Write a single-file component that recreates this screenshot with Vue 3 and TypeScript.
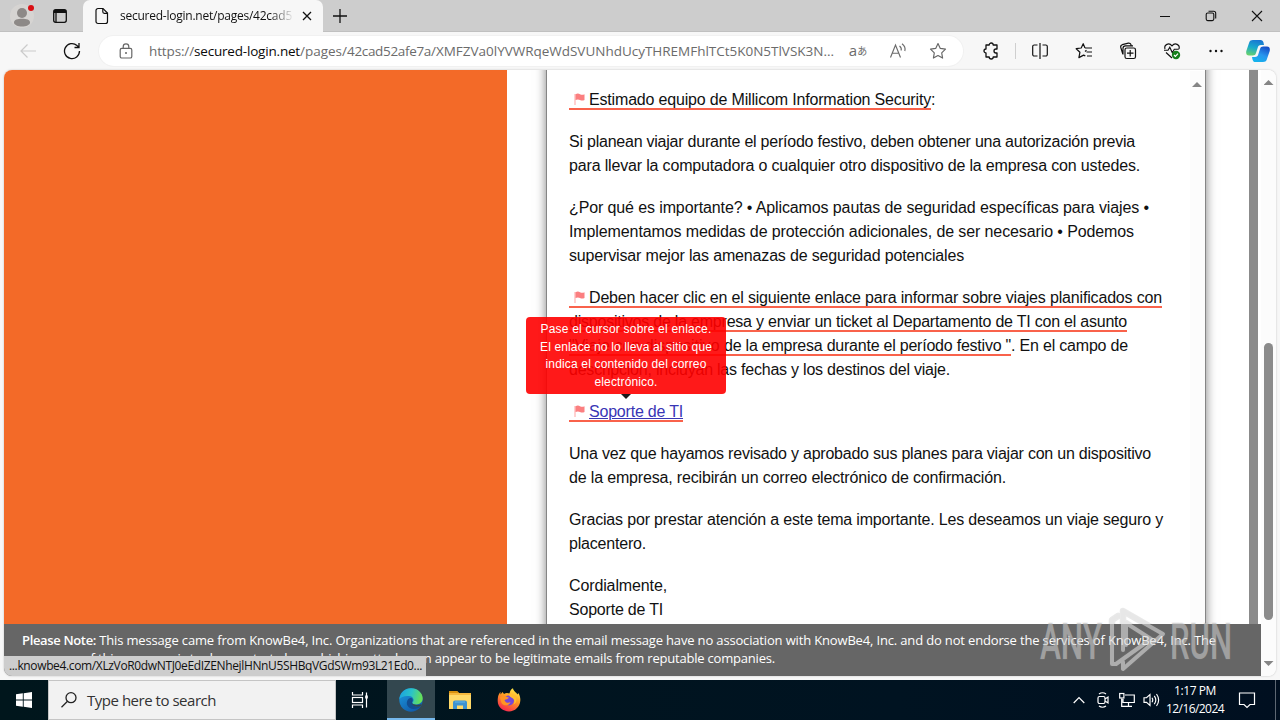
<script setup lang="ts">
interface Segment {
  text: string
  width: number
  kind?: 'marked' | 'link'
  flag?: boolean
}

/* Spreads the text evenly so that it takes up the given width. */
const vFit = {
  mounted(el: HTMLElement, binding: { value: number }) {
    const natural = el.getBoundingClientRect().width
    const count = (el.textContent ?? '').length
    if (count > 0) el.style.letterSpacing = `${(binding.value - natural) / count}px`
  },
}

const paragraphs: Segment[][][] = [
  [[{ text: 'Estimado equipo de Millicom Information Security', width: 342, kind: 'marked', flag: true }, { text: ':', width: 4 }]],
  [
    [{ text: 'Si planean viajar durante el período festivo, deben obtener una autorización previa', width: 566 }],
    [{ text: 'para llevar la computadora o cualquier otro dispositivo de la empresa con ustedes.', width: 571 }],
  ],
  [
    [{ text: '¿Por qué es importante? • Aplicamos pautas de seguridad específicas para viajes •', width: 580 }],
    [{ text: 'Implementamos medidas de protección adicionales, de ser necesario • Podemos', width: 565 }],
    [{ text: 'supervisar mejor las amenazas de seguridad potenciales', width: 395 }],
  ],
  [
    [{ text: 'Deben hacer clic en el siguiente enlace para informar sobre viajes planificados con', width: 573, kind: 'marked', flag: true }],
    [{ text: 'dispositivos de la empresa y enviar un ticket al Departamento de TI con el asunto', width: 558, kind: 'marked' }],
    [
      { text: '"Viaje con dispositivo ', width: 155, kind: 'marked' },
      { text: 'de la empresa durante el período festivo "', width: 287, kind: 'marked' },
      { text: '. En el campo de', width: 117 },
    ],
    [{ text: 'descripción, incluyan las fechas y los destinos del viaje.', width: 381 }],
  ],
  [[{ text: 'Soporte de TI', width: 94, kind: 'link', flag: true }]],
  [
    [{ text: 'Una vez que hayamos revisado y aprobado sus planes para viajar con un dispositivo', width: 582 }],
    [{ text: 'de la empresa, recibirán un correo electrónico de confirmación.', width: 437 }],
  ],
  [
    [{ text: 'Gracias por prestar atención a este tema importante. Les deseamos un viaje seguro y', width: 594 }],
    [{ text: 'placentero.', width: 77 }],
  ],
  [[{ text: 'Cordialmente,', width: 98 }], [{ text: 'Soporte de TI', width: 94 }]],
]

const tip: Segment[] = [
  { text: 'Pase el cursor sobre el enlace.', width: 171 },
  { text: 'El enlace no lo lleva al sitio que', width: 172 },
  { text: 'indica el contenido del correo', width: 161 },
  { text: 'electrónico.', width: 63 },
]
</script>

<template>
  <div class="screen">
    <header class="tabstrip">
      <div class="cell profile">
        <svg width="28" height="28" viewBox="0 0 28 28">
          <circle cx="14" cy="14" r="12" fill="#d6d4d2" />
          <circle cx="14" cy="11" r="5" fill="#8d8987" />
          <path d="M6 20.5c0-3 3.500-3.800 8-3.800s8 .8 8 3.800c0 2.500-4 4-8 4s-8-1.500-8-4z" fill="#8d8987" />
          <circle cx="23" cy="6" r="3" fill="#d90f14" />
        </svg>
      </div>
      <div class="cell tabmenu">
        <svg width="16" height="16" viewBox="0 0 16 16" fill="none" stroke="#111">
          <rect x="1.700" y="1.700" width="12.600" height="12.600" rx="2" stroke-width="1.300" />
          <path d="M2 3.500h12" stroke-width="3" /><path d="M4 3v11" stroke-width="1.300" />
        </svg>
      </div>
      <div class="tab">
        <svg width="14" height="18" viewBox="0 0 14 18" fill="none" stroke="#111" stroke-width="1.200">
          <path d="M3 1.500h5l4.500 4.500v8.500a2 2 0 0 1-2 2H3a2 2 0 0 1-2-2v-11a2 2 0 0 1 2-2z" />
          <path d="M7.800 1.800v3a1.500 1.500 0 0 0 1.500 1.500h3" />
        </svg>
        <div class="tabname"><span v-fit="172" class="run">secured-login.net/pages/42cad5</span></div>
        <svg width="12" height="12" viewBox="0 0 12 12" stroke="#111" stroke-width="1.300"><path d="M2 2l8 8M10 2l-8 8" /></svg>
      </div>
      <div class="cell plus">
        <svg width="16" height="16" viewBox="0 0 16 16" stroke="#111" stroke-width="1.300"><path d="M8 1v14M1 8h14" /></svg>
      </div>
      <div class="controls">
        <div class="cell"><svg width="12" height="12" viewBox="0 0 12 12" stroke="#111"><path d="M1 6.500h10" /></svg></div>
        <div class="cell">
          <svg width="12" height="12" viewBox="0 0 12 12" fill="none" stroke="#111" stroke-width="1.100">
            <rect x="1.200" y="3" width="7.600" height="7.600" rx="1.500" /><path d="M3.500 1.200h5.200a2 2 0 0 1 2 2v5.200" />
          </svg>
        </div>
        <div class="cell"><svg width="12" height="12" viewBox="0 0 12 12" stroke="#111" stroke-width="1.100"><path d="M1 1l10 10M11 1L1 11" /></svg></div>
      </div>
    </header>

    <nav class="toolbar">
      <div class="tool first">
        <svg width="18" height="16" viewBox="0 0 18 16" fill="none" stroke="#cbcbcb" stroke-width="1.200"><path d="M17 8H2M8.500 1.500L2 8l6.500 6.500" /></svg>
      </div>
      <div class="tool">
        <svg width="18" height="18" viewBox="0 0 18 18" fill="none" stroke="#111" stroke-width="1.300"><path d="M16.500 9A7.500 7.500 0 1 1 14 3.500L16 5.200M16 1v4.500h-4.500" /></svg>
      </div>
      <div class="address">
        <svg class="lock" width="14" height="16" viewBox="0 0 14 16" fill="none" stroke="#666" stroke-width="1.200">
          <rect x="1.200" y="5.300" width="11.600" height="9.700" rx="1.600" /><path d="M4.200 5.200V3.700a2.800 2.800 0 0 1 5.600 0v1.500" /><circle cx="7" cy="10" r="1" fill="#666" stroke="none" />
        </svg>
        <div class="url">
          <span v-fit="45" class="run">https://</span><span v-fit="106" class="run host">secured-login.net</span><span v-fit="47" class="run">/pages/</span><span v-fit="84" class="run">42cad52afe7a</span><span v-fit="403" class="run">/XMFZVa0lYVWRqeWdSVUNhdUcyTHREMFhlTCt5K0N5TlVSK3N...</span>
        </div>
        <div class="inpill"><span class="lat">a</span><span class="kana">あ</span></div>
        <div class="inpill">
          <svg width="18" height="18" viewBox="0 0 18 18" fill="none" stroke="#6b6b6b" stroke-width="1.150">
            <path d="M1.500 15.500L6.500 3l5 12.500M3.200 11.200h6.600M10.500 4q2.300 1.800 1.700 4.500M13 1.700q4 2.800 2.800 7.300" />
          </svg>
        </div>
        <div class="inpill">
          <svg width="18" height="18" viewBox="0 0 18 18" fill="none" stroke="#666" stroke-width="1.150" stroke-linejoin="round">
            <path d="M9 1.500l2.300 4.900 5.200.7-3.800 3.700.9 5.300L9 13.600l-4.600 2.500.9-5.300L1.500 7.100l5.200-.7z" />
          </svg>
        </div>
      </div>
      <div class="tool ext">
        <svg width="18" height="18" viewBox="0 0 18 18" fill="none" stroke="#111" stroke-width="1.300" stroke-linejoin="round">
          <path d="M4 3h3.200a2 2 0 0 1 4 0H15v4h-1a2 2 0 0 0 0 4h1v4h-3.800a2 2 0 0 1-4 0H4v-4a2 2 0 1 1 0-4z" />
        </svg>
      </div>
      <div class="rule"></div>
      <div class="tool">
        <svg width="18" height="18" viewBox="0 0 18 18" fill="none" stroke="#111" stroke-width="1.200">
          <path d="M6.500 3H3.200A1.500 1.500 0 0 0 1.700 4.500v8A1.500 1.500 0 0 0 3.200 14h3.300M9 1v16M11.500 3h3.300a1.500 1.500 0 0 1 1.500 1.500v8a1.500 1.500 0 0 1-1.500 1.500h-3.300" />
        </svg>
      </div>
      <div class="tool">
        <svg width="18" height="18" viewBox="0 0 18 18" fill="none" stroke="#111" stroke-width="1.200" stroke-linejoin="round">
          <path d="M10 6H17M11.500 10H17M12 14H17M10 6L8.200 1.700 6.200 6 1.200 6.700l3.700 3.600-1 5.300 4.700-2.500 1.700.8M10 9.500l1.500-1.200" />
        </svg>
      </div>
      <div class="tool">
        <svg width="18" height="18" viewBox="0 0 18 18" fill="none" stroke="#111" stroke-width="1.200">
          <rect x="6" y="6" width="10.500" height="10.500" rx="1.800" /><path d="M11.200 8v6.500M8 11.200h6.500M3.800 12L1.800 5.500A2.300 2.300 0 0 1 3.300 2.700l6-1.500a2.300 2.300 0 0 1 2.800 2M4 12.500V6.300a2.500 2.500 0 0 1 2.500-2.500H14" />
        </svg>
      </div>
      <div class="tool">
        <svg width="18" height="18" viewBox="0 0 18 18" fill="none" stroke="#111" stroke-width="1.150">
          <path d="M2 7C.7 2.500 6 .2 9 3.800 12 .2 17.300 2.500 16 7M1 8.200h4l1.800-3 2.500 5.500 2-3.500h4.500M3 10.500l6 5.500" />
          <circle cx="13" cy="13" r="4.200" fill="#15801b" stroke="none" /><path d="M11 13l1.400 1.500 2.600-2.800" stroke="#fff" />
        </svg>
      </div>
      <div class="tool">
        <svg width="16" height="4" viewBox="0 0 16 4" fill="#111"><circle cx="2.500" cy="2" r="1.200" /><circle cx="8" cy="2" r="1.200" /><circle cx="13.500" cy="2" r="1.200" /></svg>
      </div>
      <div class="tool copilot">
        <svg width="24" height="24" viewBox="0 0 24 24">
          <defs>
            <linearGradient id="ca" x1=".6" y1="0" x2=".3" y2="1"><stop offset="0" stop-color="#1976d2" /><stop offset=".5" stop-color="#18a9cc" /><stop offset="1" stop-color="#66d16f" /></linearGradient>
            <linearGradient id="cb" x1=".7" y1="0" x2=".2" y2="1"><stop offset="0" stop-color="#164fc7" /><stop offset=".5" stop-color="#2796ee" /><stop offset="1" stop-color="#14b6ec" /></linearGradient>
          </defs>
          <path d="M7 1h7.500c1.800 0 2.500 1 3 2.600L18 6h-3c-2 0-2.800 1-3.300 2.800L10 14c-.6 1.800-1.500 2.500-3.200 2.500H3C.5 16.500-.2 14.500.3 12L3.200 3.500C3.900 1.700 5 1 7 1z" fill="url(#ca)" />
          <path d="M17 23H9.500c-1.800 0-2.500-1-3-2.600L6 18h3c2 0 2.800-1 3.300-2.800L14 10c.6-1.800 1.500-2.500 3.200-2.500H21c2.500 0 3.200 2 2.700 4.500l-2.900 8.500C20.100 22.300 19 23 17 23z" fill="url(#cb)" />
        </svg>
      </div>
    </nav>

    <main class="viewport">
      <div class="page">
        <div class="columns">
          <aside class="orange"></aside>
          <section class="stage">
            <article class="mail">
              <div class="body">
                <div v-for="(p, i) in paragraphs" :key="i" class="para">
                  <div v-for="(line, j) in p" :key="j" class="line">
                    <span v-for="(s, k) in line" :key="k" class="seg" :class="s.kind">
                      <svg v-if="s.flag" class="flag" width="20" height="20" viewBox="0 0 20 20">
                        <path d="M6 6v11" stroke="#ffb3b3" stroke-width="1.200" />
                        <path d="M6.500 6.200q2.500-1.200 4.500 0t4.500 0V12q-2.500 1.200-4.500 0t-4.500 0z" fill="#fb7f80" />
                      </svg>
                      <span v-fit="s.width" class="run">{{ s.text }}</span>
                    </span>
                  </div>
                </div>
              </div>
              <div class="innerbar"><i class="up"></i></div>
            </article>
          </section>
          <div class="graybar"></div>
        </div>
        <footer class="note">
          <div class="noteline"><b v-fit="74" class="run">Please Note:</b><span v-fit="1120" class="run"> This message came from KnowBe4, Inc. Organizations that are referenced in the email message have no association with KnowBe4, Inc. and do not endorse the services of KnowBe4, Inc. The</span></div>
          <div class="noteline"><span v-fit="61" class="run">purpose </span><span v-fit="692" class="run">of this message is to demonstrate how phishing attacks can appear to be legitimate emails from reputable companies.</span></div>
        </footer>
      </div>
      <div class="outerbar"><i class="up"></i><div class="thumb"></div><i class="down"></i></div>

      <div class="tooltip">
        <div v-for="(t, i) in tip" :key="i" class="tipline"><span v-fit="t.width" class="run">{{ t.text }}</span></div>
      </div>
      <div class="status"><span v-fit="413" class="run">...knowbe4.com/XLzVoR0dwNTJ0eEdIZENhejlHNnU5SHBqVGdSWm93L21Ed0...</span></div>
    </main>

    <div class="taskbar">
      <div class="start">
        <svg width="16" height="16" viewBox="0 0 16 16" fill="#fff"><path d="M0 2.300L6.800 1.300V7.500H0zM7.700 1.200L16 0V7.500H7.700zM0 8.400H6.800V14.700L0 13.700zM7.700 8.400H16V16L7.700 14.800z" /></svg>
      </div>
      <div class="search">
        <svg width="18" height="18" viewBox="0 0 18 18" fill="none" stroke="#222" stroke-width="1.300"><circle cx="11" cy="6.700" r="5" /><path d="M7.500 10.300L1.500 16.300" /></svg>
        <span v-fit="129" class="run">Type here to search</span>
      </div>
      <div class="task view">
        <svg width="18" height="18" viewBox="0 0 18 18" fill="none" stroke="#fff" stroke-width="1.200">
          <path d="M1.500 1v3h10V1M1.500 17v-3h10v3M15.500 1.500v15" /><rect x="1.500" y="6.500" width="10" height="5" /><rect x="14.200" y="4.500" width="2.600" height="3" fill="#fff" stroke="none" />
        </svg>
      </div>
      <div class="task edge">
        <svg width="24" height="24" viewBox="0 0 24 24">
          <defs>
            <linearGradient id="ea" x1="0" y1=".3" x2="1" y2=".5"><stop offset="0" stop-color="#1aa2e0" /><stop offset=".5" stop-color="#2bc3c8" /><stop offset="1" stop-color="#6be24f" /></linearGradient>
            <linearGradient id="eb" x1="0" y1="0" x2=".7" y2="1"><stop offset="0" stop-color="#1b9de2" /><stop offset="1" stop-color="#1159a8" /></linearGradient>
          </defs>
          <circle cx="12" cy="12" r="11.700" fill="url(#eb)" />
          <path d="M.3 11.500C1 4.500 6 .3 12 .3c7 0 11.700 5 11.700 10 0 4-3 6.200-6.500 6.200-3 0-4.500-1-3.300-2.500 1.500-2 .5-5.500-4-6C5.500 7.500 1.500 9 .3 11.500z" fill="url(#ea)" />
          <path d="M9 11.500c-3 4 0 9.500 5.500 9.500 3 0 5.800-1 7.200-2.500-3 1-8 .5-8.800-3.500-.2-1.500 1-2 .7-3.500-.5-2-3-2-4.600 0z" fill="#124d91" />
          <path d="M13.300 12.500c-.8 1.500-1 2 .3 3.300 2 1.400 6 1.500 9 .2l-.8 2.200c-3 1-8.300.4-9.200-3-.2-1.100.1-1.900.7-2.700z" fill="#33474f" />
        </svg>
      </div>
      <div class="task">
        <svg width="24" height="22" viewBox="0 0 24 22">
          <path d="M1 2h8l2 2h12v16H1z" fill="#f5b83d" /><path d="M1 6h22v14H1z" fill="#ffd968" /><path d="M1 2h8l2 2H1z" fill="#d8910e" />
          <path d="M5 20v-6.500a2 2 0 0 1 2-2h10a2 2 0 0 1 2 2V20h-4v-3.500H9V20z" fill="#3d92d0" /><path d="M7 13h10" stroke="#65b6e7" />
        </svg>
      </div>
      <div class="task">
        <svg width="24" height="24" viewBox="0 0 24 24">
          <defs><linearGradient id="fx" x1=".8" y1="0" x2=".3" y2="1"><stop offset="0" stop-color="#fff04b" /><stop offset=".45" stop-color="#ff9b22" /><stop offset="1" stop-color="#f8254f" /></linearGradient></defs>
          <path d="M1 9c.5-2.500 1.500-4 2.500-5v2.500L5.500 4 7 6c2-1.500 4-1 5.500-.5C13 3 14 1 16 .3c.3 3 3 3.600 4.500 6.200l.7-1.500c1.800 2.500 2.300 5 2.100 7.700-.4 6-5.300 10.700-11.300 10.700S.7 19 .7 13c0-1.500 0-2.500.3-4z" fill="url(#fx)" />
          <circle cx="12" cy="12.500" r="5" fill="#7548d8" /><path d="M3 9.500C6 7 9 8.500 12 9.500c-1 2-3 1.500-4.500 2.500 1 3 4 3.500 6 2-1 4-7 4.500-9 1z" fill="#ff9524" />
          <path d="M12.500 5.500C11 8 14 9 16 10.500s1.500 4 .5 6c4-2 4-7 0-9.500z" fill="#ffbd2e" />
        </svg>
      </div>
      <div class="tray">
        <div class="ico"><svg width="12" height="8" viewBox="0 0 12 8" fill="none" stroke="#fff" stroke-width="1.200"><path d="M.7 7L6 1.500 11.300 7" /></svg></div>
        <div class="ico">
          <svg width="14" height="18" viewBox="0 0 14 18" fill="none" stroke="#fff" stroke-width="1.200"><rect x="2" y="5.500" width="7" height="7" rx="1.500" /><path d="M9 8l3-2v6l-3-2M3 3q3.500-2.500 7 0M3 15q3.500 2.500 7 0" /></svg>
        </div>
        <div class="ico">
          <svg width="16" height="16" viewBox="0 0 16 16" fill="none" stroke="#fff" stroke-width="1.200"><path d="M6 3h9.300v7.500H4V7M9.500 11v3M6 14.300h7M2.700 6.500v7.800H6" /><rect x=".7" y="1.500" width="4.200" height="4.500" /></svg>
        </div>
        <div class="ico">
          <svg width="17" height="16" viewBox="0 0 17 16" fill="none" stroke="#fff" stroke-width="1.150"><path d="M1 5.700h2.500L7 2.500v11l-3.500-3.200H1zM9 5.700q1.500 2.300 0 4.600M11.300 3.800q3 4.200 0 8.400M13.500 2q4.300 6 0 12" /></svg>
        </div>
        <div class="clock">
          <div><span v-fit="42" class="run">1:17 PM</span></div>
          <div><span v-fit="58" class="run">12/16/2024</span></div>
        </div>
        <div class="notice">
          <svg width="18" height="18" viewBox="0 0 18 18" fill="none" stroke="#fff" stroke-width="1.200"><path d="M1.500 2h15v11.500h-4.500L9 16.500l-3-3H1.500z" /></svg>
        </div>
        <div class="peek"></div>
      </div>
    </div>

    <svg class="watermark" width="204" height="72" viewBox="0 0 204 72">
      <g class="wmtext">
        <text x="4" y="54" textLength="62" lengthAdjust="spacingAndGlyphs">ANY</text>
        <text x="134" y="54" textLength="62" lengthAdjust="spacingAndGlyphs">RUN</text>
      </g>
      <g fill="none" stroke-linejoin="round" stroke-linecap="round">
        <path class="halo" d="M82 11L76 15V59L80 59L115 34L90 18V40M87 45V6L127 29L87 64V57" />
        <path class="ribbon" d="M82 11L76 15V59L80 59L115 34L90 18V40M87 45V6L127 29L87 64V57" />
      </g>
    </svg>
  </div>
</template>

<style>
html, body { margin: 0; overflow: hidden; }
</style>

<style scoped>
.screen { position: relative; width: 1280px; height: 720px; overflow: hidden; display: flex; flex-direction: column; background: #f7f7f7; font-family: "Open Sans", "Noto Sans", sans-serif; color: #111; }
.screen * { box-sizing: border-box; }
svg { display: block; flex: none; }
.run { display: inline-block; white-space: pre; flex: none; }
.cell { display: flex; align-items: center; justify-content: center; height: 32px; flex: none; }
.tabstrip { height: 32px; display: flex; background: #cdcdcd; flex: none; box-shadow: inset 0 -1px #c0c0c0; }
.profile { width: 44px; }
.tabmenu { width: 32px; }
.tab { width: 240px; margin-left: 7px; background: #f7f7f7; border-radius: 7px 7px 0 0; display: flex; align-items: center; padding: 0 10px 0 12px; }
.tabname { margin-left: 11px; width: 174px; overflow: hidden; font-size: 12px; line-height: 20px; -webkit-mask-image: linear-gradient(90deg, #000 86%, transparent); mask-image: linear-gradient(90deg, #000 86%, transparent); margin-right: 7px; flex: none; }
.plus { width: 34px; }
.controls { margin-left: auto; display: flex; }
.controls .cell { width: 46px; }
.toolbar { height: 38px; flex: none; display: flex; align-items: center; background: #f7f7f7; }
.tool { width: 44px; height: 38px; display: flex; align-items: center; justify-content: center; flex: none; }
.first { margin-left: 6px; }
.address { margin-left: 5px; width: 864px; height: 30px; border-radius: 15px; background: #fff; box-shadow: 0 0 0 1px #f1f1f1; display: flex; align-items: center; padding-left: 20px; flex: none; }
.url { width: 689px; margin-left: 16px; display: flex; font-size: 13.500px; line-height: 20px; color: #6b6b6b; flex: none; }
.host { color: #0a0a0a; }
.inpill { width: 40px; height: 30px; display: flex; align-items: center; justify-content: center; color: #6b6b6b; flex: none; line-height: 20px; }
.lat { font-size: 15px; margin-top: -3px; }
.kana { font-family: "Noto Sans CJK JP", sans-serif; font-size: 10px; margin-top: -1px; }
.ext { margin-left: 6px; }
.rule { width: 1px; height: 16px; background: #cfcfcf; margin: 0 2px; }
.copilot { width: 40px; }

.viewport { position: relative; height: 606px; margin: 0 4px 4px; width: 1272px; flex: none; display: flex; background: #fff; border-radius: 8px; box-shadow: 0 0 2px #bbb; }
.page { width: 1257px; height: 606px; display: flex; flex-direction: column; overflow: hidden; border-radius: 8px 0 0 8px; }
.columns { height: 554px; display: flex; overflow: hidden; }
.orange { width: 503px; background: #f36a28; }
.stage { width: 742px; padding-left: 39px; overflow: hidden; }
.graybar { width: 9px; background: #8b8b8b; margin-right: 3px; }
.mail { width: 660px; height: 600px; margin-top: -20px; padding-top: 20px; border: 1px solid #858585; background: #fff; box-shadow: 0 0 10px rgba(0, 0, 0, .5); display: flex; }
.body { width: 643px; padding: 17px 0 0 22px; flex: none; font-family: "Liberation Sans", Arial, sans-serif; font-size: 16px; line-height: 24px; color: #111; }
.para { margin-bottom: 18px; }
.line { height: 24px; display: flex; white-space: pre; }
.seg { height: 22px; display: flex; flex: none; }
.marked, .link { border-bottom: 2px solid #f9624b; }
.link .run { color: #3835b5; text-decoration: underline; text-underline-offset: 1px; text-decoration-thickness: 1px; height: 20px; }
.innerbar { width: 15px; background: #fcfcfc; padding-top: 11px; }
.up, .down { display: block; width: 10px; height: 5px; background: #858585; }
.up { clip-path: polygon(50% 0, 100% 100%, 0 100%); }
.down { clip-path: polygon(0 0, 100% 0, 50% 100%); }
.innerbar .up { margin-left: 2px; }
.outerbar { width: 15px; display: flex; flex-direction: column; align-items: center; padding: 10px 0 10px; background: #fcfcfc; border-radius: 0 8px 8px 0; }
.thumb { width: 9px; height: 277px; margin-top: 258px; margin-bottom: auto; background: #8b8b8b; border-radius: 5px; }
.note { height: 52px; background: #666; color: #fff; padding: 7px 0 0 18px; font-size: 13px; line-height: 18px; flex: none; }
.noteline { display: flex; height: 18px; }
.note b { font-weight: 600; }
.tooltip { position: absolute; left: 522px; top: 247px; width: 200px; height: 77px; padding-top: 4px; border-radius: 4px; background: rgba(255, 0, 0, .9); color: #fff; font: 12px/17.500px "Liberation Sans", Arial, sans-serif; text-align: center; }
.tipline { height: 17.500px; }
.tooltip::after { content: ""; position: absolute; left: 95px; top: 77px; border: 5px solid transparent; border-top-color: #1a1a1a; border-bottom: 0; }
.status { position: absolute; left: 0; top: 586px; width: 422px; height: 20px; background: #cdcdcd; border-radius: 0 0 0 8px; padding-left: 5px; font-size: 12px; line-height: 19px; color: #111; }

.taskbar { height: 40px; flex: none; display: flex; background: linear-gradient(90deg, #00161c, #001321 70%, #000f20); color: #fff; }
.start { width: 48px; display: flex; align-items: center; justify-content: center; }
.search { width: 288px; background: #f2f2f2; border: 1px solid #c5c5c5; color: #333; display: flex; align-items: center; padding-left: 11px; font-size: 15px; gap: 9px; }
.task { width: 49px; display: flex; align-items: center; justify-content: center; }
.task.view { width: 51px; padding-right: 3px; }
.task.edge { width: 48px; background: #33474f; border-bottom: 2px solid #76b9ed; padding-top: 2px; }
.tray { margin-left: auto; display: flex; align-items: center; height: 40px; }
.ico { width: 24px; display: flex; justify-content: center; }
.clock { width: 64px; font-size: 12px; line-height: 18px; text-align: center; }
.notice { width: 48px; padding-right: 8px; display: flex; justify-content: center; }
.peek { width: 5px; height: 40px; border-left: 1px solid #5d6773; }
.watermark { position: absolute; left: 1036px; top: 605px; }
.wmtext { font: 500 50px Roboto, sans-serif; fill: #c8c8c8; fill-opacity: .62; stroke: #999; stroke-opacity: .15; stroke-width: 1.500px; }
.halo { stroke: #777; stroke-opacity: .16; stroke-width: 6.500px; }
.ribbon { stroke: #e6e6e6; stroke-opacity: .55; stroke-width: 4px; }
</style>
